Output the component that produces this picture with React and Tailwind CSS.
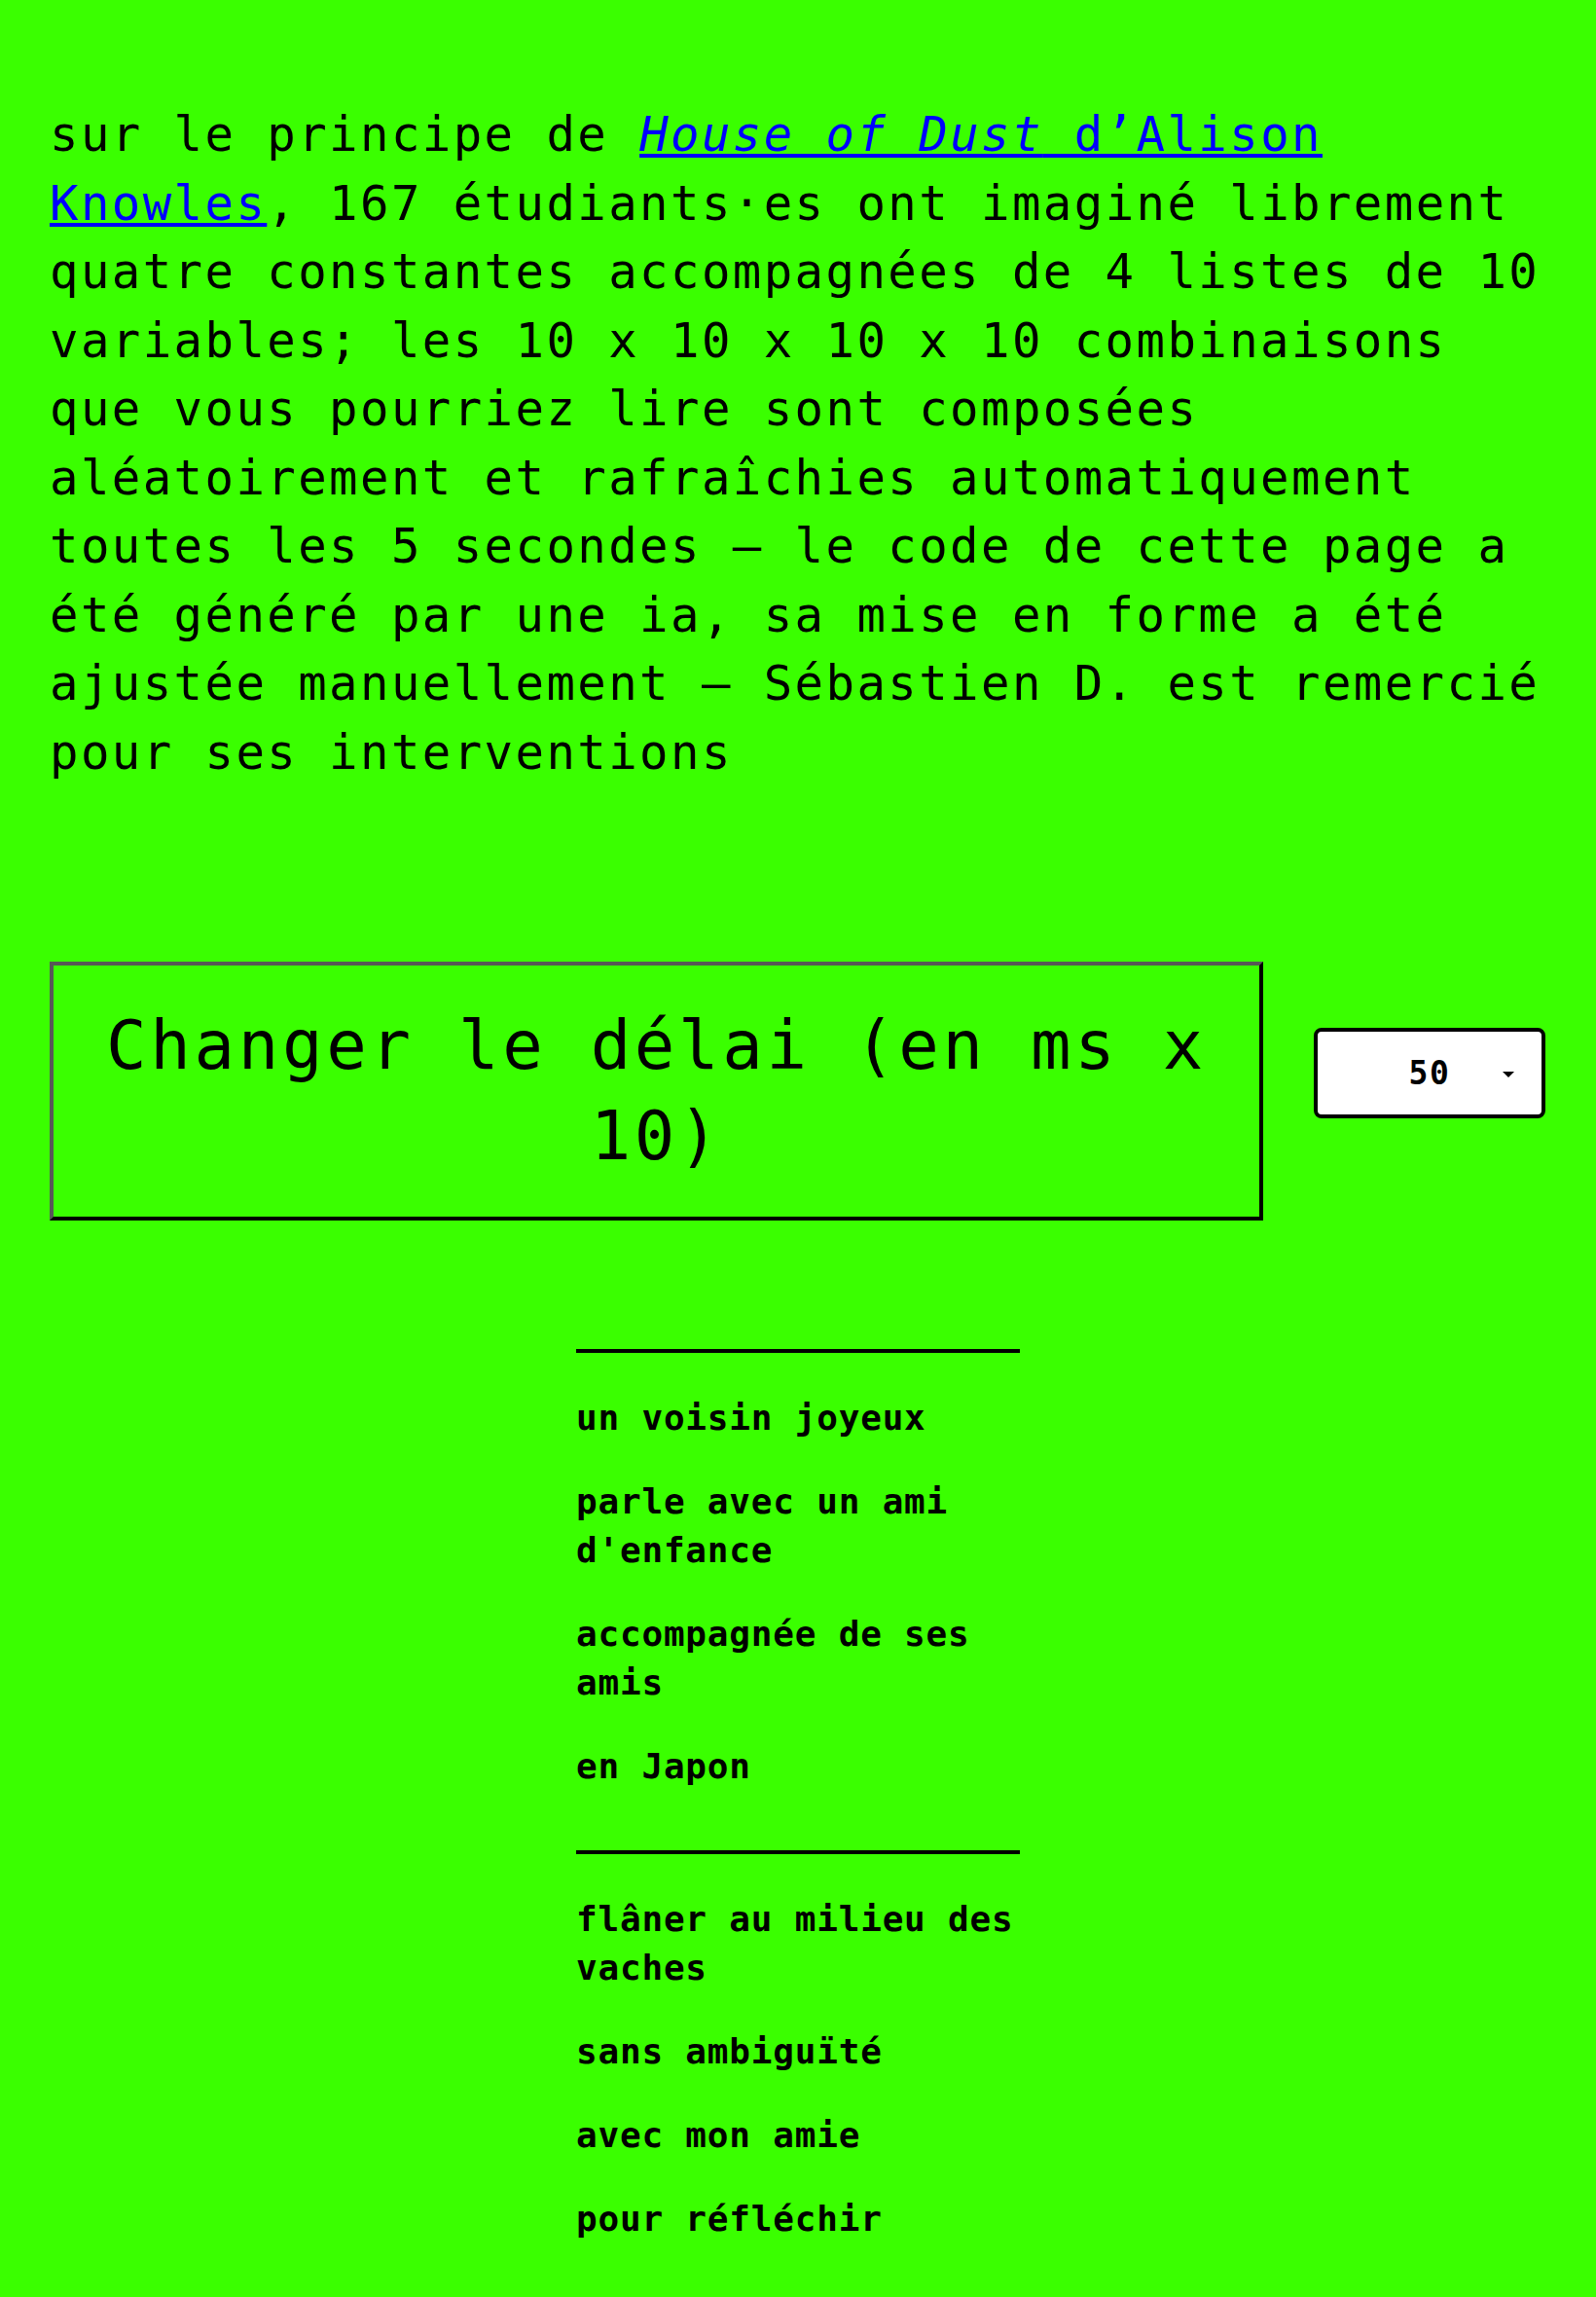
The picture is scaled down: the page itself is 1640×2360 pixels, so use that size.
const GROUPS = [
  ['un voisin joyeux', "parle avec un ami d'enfance", 'accompagnée de ses amis', 'en Japon'],
  ['flâner au milieu des vaches', 'sans ambiguïté', 'avec mon amie', 'pour réfléchir'],
];

function Delay() {
  return (
    <div className="mt-[179px] flex items-start">
      <button className="w-[1247px] shrink-0 border-4 border-t-[#575757] border-l-[#575757] border-r-black border-b-black px-[36px] py-[36px] text-center text-[69px] leading-[93px] tracking-[3.7px]">
        Changer le délai (en ms x 10)
      </button>
      <div className="relative ml-[52px] mt-[68px] flex h-[93px] w-[238px] shrink-0 items-center justify-center rounded-[8px] border-4 border-black bg-white text-[33px] font-bold tracking-[1.6px]">
        50
        <span className="absolute right-[28px] top-[41px] h-0 w-0 border-x-[6px] border-t-[6px] border-x-transparent border-t-black" />
      </div>
    </div>
  );
}

export default function App() {
  return (
    <div className="min-h-[2360px] bg-[#3aff00] px-[51px] pt-[104px] text-black font-['DejaVu_Sans_Mono',monospace]">
      <p className="text-[49px] leading-[70.5px] tracking-[2.4px]">
        sur le principe de{' '}
        <a href="#" className="text-[#0000ff] underline decoration-[4px] underline-offset-[3px]">
          <i>House of Dust</i> d’Alison Knowles
        </a>
        , 167 étudiants·es ont imaginé librement quatre constantes accompagnées de 4 listes de 10 variables; les 10 x 10 x 10 x 10 combinaisons que vous pourriez lire sont composées aléatoirement et rafraîchies automatiquement toutes les 5 secondes — le code de cette page a été généré par une ia, sa mise en forme a été ajustée manuellement – Sébastien D. est remercié pour ses interventions
      </p>

      <Delay />

      <div className="mx-auto mt-[132px] w-[456px]">
        {GROUPS.map((items, gi) => (
          <div key={gi} className="flex flex-col gap-[36px] border-t-4 border-black pt-[42px] pb-[61px]">
            {items.map(t => (
              <div key={t} className="text-[36px] font-bold leading-[50px] tracking-[0.8px]">{t}</div>
            ))}
          </div>
        ))}
      </div>
    </div>
  );
}
